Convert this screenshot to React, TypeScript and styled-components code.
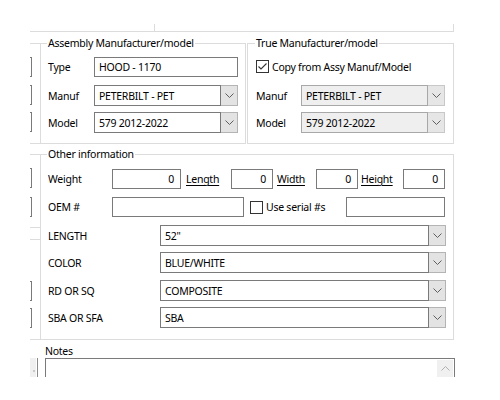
import React from "react";
import styled, { createGlobalStyle } from "styled-components";

const LINE = "#dcdcdc";
const EDGE = "#7a7a7a";

const Global = createGlobalStyle`
  html, body { margin: 0; padding: 0; background: #fff; }
  body {
    font-family: "Noto Sans", "Open Sans", sans-serif;
    font-size: 10.5px;
    letter-spacing: -0.25px;
    color: #000;
  }
`;

const Page = styled.div`
  width: 500px;
  height: 400px;
  overflow: hidden;
  box-sizing: border-box;
  padding-left: 30px;
  display: flex;
  flex-direction: column;
`;

const TopStrip = styled.div`
  display: flex;
  align-items: flex-end;
  height: 32px;
  width: 424px;
`;

const TopLeft = styled.div`
  width: 124px;
  border-bottom: 1px solid ${LINE};
`;

const TopRight = styled.div`
  flex: 1;
  height: 7px;
  border: 1px solid ${LINE};
  border-top: none;
`;

const Body = styled.div`
  display: flex;
`;

const StubCol = styled.div`
  width: 10px;
  display: flex;
  flex-direction: column;
`;

const Stub = styled.div<{ $top: number; $kind: "line" | "edge" }>`
  margin-top: ${(p) => p.$top}px;
  ${(p) =>
    p.$kind === "line"
      ? `height: 0; border-top: 1px solid ${LINE};`
      : `width: 1px; height: 18px; border: 1px solid ${EDGE}; border-left: none;`}
`;

const Main = styled.div`
  width: 414px;
  display: flex;
  flex-direction: column;
`;

const GroupRow = styled.div`
  display: flex;
  gap: 1px;
  margin-top: 11px;
`;

const Group = styled.div<{ $w: number; $h: number; $pad: number; $top?: number }>`
  box-sizing: border-box;
  width: ${(p) => p.$w}px;
  height: ${(p) => p.$h}px;
  margin-top: ${(p) => p.$top ?? 0}px;
  border: 1px solid ${LINE};
  padding-left: ${(p) => p.$pad}px;
  display: flex;
  flex-direction: column;
`;

const Caption = styled.div`
  align-self: flex-start;
  margin: -8px 0 0 -1px;
  padding: 0 1px;
  background: #fff;
  height: 15px;
  line-height: 15px;
  white-space: nowrap;
`;

const Row = styled.div<{ $top: number; $h: number }>`
  display: flex;
  align-items: center;
  margin-top: ${(p) => p.$top}px;
  height: ${(p) => p.$h}px;
`;

const Label = styled.div<{ $w: number }>`
  width: ${(p) => p.$w}px;
  flex: none;
  white-space: nowrap;
`;

const LinkLabel = styled.div<{ $w: number; $pad: number }>`
  width: ${(p) => p.$w}px;
  box-sizing: border-box;
  padding-left: ${(p) => p.$pad}px;
  flex: none;
  text-decoration: underline;
  text-underline-offset: 2px;
  white-space: nowrap;
`;

const TextBox = styled.div<{ $w: number; $right?: boolean }>`
  box-sizing: border-box;
  width: ${(p) => p.$w}px;
  height: 100%;
  flex: none;
  border: 1px solid ${EDGE};
  background: #fff;
  display: flex;
  align-items: center;
  justify-content: ${(p) => (p.$right ? "flex-end" : "flex-start")};
  padding: 0 6px 0 4px;
  white-space: nowrap;
`;

const Combo = styled.div<{ $w: number }>`
  width: ${(p) => p.$w}px;
  height: 100%;
  flex: none;
  display: flex;
`;

const ComboField = styled.div<{ $disabled?: boolean }>`
  box-sizing: border-box;
  flex: 1;
  height: 100%;
  border: 1px solid ${(p) => (p.$disabled ? "#a8a8a8" : EDGE)};
  background: ${(p) => (p.$disabled ? "#efefef" : "#fff")};
  display: flex;
  align-items: center;
  padding-left: 4px;
  white-space: nowrap;
`;

const ComboButton = styled.div<{ $disabled?: boolean }>`
  box-sizing: border-box;
  width: 17px;
  height: 100%;
  flex: none;
  border: 1px solid ${(p) => (p.$disabled ? "#c8c8c8" : "#b4b4b4")};
  border-left: none;
  background: ${(p) => (p.$disabled ? "#e6e6e6" : "#e3e3e3")};
  display: flex;
  align-items: center;
  justify-content: center;
`;

const CheckBox = styled.div`
  box-sizing: border-box;
  width: 13px;
  height: 13px;
  flex: none;
  border: 1px solid #333;
  background: #fff;
  display: flex;
`;

const CheckText = styled.div`
  margin-left: 3px;
  white-space: nowrap;
`;

const CheckSpacer = styled.div<{ $w: number; $pad: number }>`
  width: ${(p) => p.$w}px;
  box-sizing: border-box;
  padding-left: ${(p) => p.$pad}px;
  flex: none;
  display: flex;
  align-items: center;
`;

const NotesSection = styled.div`
  display: flex;
  align-items: flex-end;
`;

const NotesStub = styled.div`
  box-sizing: border-box;
  width: 8px;
  height: 19px;
  border-right: 1px solid #8a8a8a;
  background: linear-gradient(to right, #f0f0f0 0 6px, #fff 6px);
  display: flex;
  align-items: center;
  padding-left: 3px;
`;

const NotesDot = styled.div`
  width: 2px;
  height: 2px;
  margin-top: 6px;
  background: #c8c8c8;
`;

const NotesCol = styled.div`
  margin-left: 7px;
  display: flex;
  flex-direction: column;
`;

const NotesLabel = styled.div`
  margin-top: 5px;
  height: 13px;
  line-height: 13px;
`;

const NotesBox = styled.div`
  box-sizing: border-box;
  width: 410px;
  height: 19px;
  border: 1px solid ${EDGE};
  border-bottom: none;
  display: flex;
  justify-content: flex-end;
  padding: 1px 1px 0 0;
`;

const ScrollUp = styled.div`
  width: 16px;
  height: 100%;
  background: #f0f0f0;
  display: flex;
  align-items: center;
  justify-content: center;
`;

const Chevron = ({ up, color }: { up?: boolean; color: string }) => (
  <svg width="9" height="5" viewBox="0 0 9 5">
    <path
      d={up ? "M0.5 4.5 L4.5 0.5 L8.5 4.5" : "M0.5 0.5 L4.5 4.5 L8.5 0.5"}
      fill="none"
      stroke={color}
      strokeWidth="1"
    />
  </svg>
);

const Check = () => (
  <svg width="11" height="11" viewBox="0 0 11 11">
    <path d="M1.5 5.5 L4 8 L9.5 2.5" fill="none" stroke="#333" strokeWidth="1.1" />
  </svg>
);

const DropDown = ({
  w,
  value,
  disabled,
}: {
  w: number;
  value: string;
  disabled?: boolean;
}) => (
  <Combo $w={w}>
    <ComboField $disabled={disabled}>{value}</ComboField>
    <ComboButton $disabled={disabled}>
      <Chevron color="#5f5f5f" />
    </ComboButton>
  </Combo>
);

const stubs: { top: number; kind: "line" | "edge" }[] = [
  { top: 11, kind: "line" },
  { top: 13, kind: "edge" },
  { top: 8, kind: "edge" },
  { top: 7, kind: "edge" },
  { top: 11, kind: "line" },
  { top: 10, kind: "line" },
  { top: 13, kind: "edge" },
  { top: 9, kind: "edge" },
  { top: 10, kind: "line" },
  { top: 11, kind: "line" },
  { top: 41, kind: "edge" },
  { top: 7, kind: "edge" },
  { top: 11, kind: "line" },
];

const attributes = [
  { label: "LENGTH", value: '52"', top: 8 },
  { label: "COLOR", value: "BLUE/WHITE", top: 6 },
  { label: "RD OR SQ", value: "COMPOSITE", top: 7 },
  { label: "SBA OR SFA", value: "SBA", top: 6 },
];

export default function App() {
  return (
    <>
      <Global />
      <Page>
        <TopStrip>
          <TopLeft />
          <TopRight />
        </TopStrip>
        <Body>
          <StubCol>
            {stubs.map((s, i) => (
              <Stub key={i} $top={s.top} $kind={s.kind} />
            ))}
          </StubCol>
          <Main>
            <GroupRow>
              <Group $w={206} $h={101} $pad={7}>
                <Caption>Assembly Manufacturer/model</Caption>
                <Row $top={6} $h={20}>
                  <Label $w={46}>Type</Label>
                  <TextBox $w={144}>HOOD - 1170</TextBox>
                </Row>
                <Row $top={8} $h={21}>
                  <Label $w={46}>Manuf</Label>
                  <DropDown w={144} value="PETERBILT - PET" />
                </Row>
                <Row $top={6} $h={21}>
                  <Label $w={46}>Model</Label>
                  <DropDown w={144} value="579 2012-2022" />
                </Row>
              </Group>
              <Group $w={207} $h={101} $pad={8}>
                <Caption>True Manufacturer/model</Caption>
                <Row $top={9} $h={13}>
                  <CheckBox>
                    <Check />
                  </CheckBox>
                  <CheckText>Copy from Assy Manuf/Model</CheckText>
                </Row>
                <Row $top={12} $h={21}>
                  <Label $w={45}>Manuf</Label>
                  <DropDown w={144} value="PETERBILT - PET" disabled />
                </Row>
                <Row $top={6} $h={21}>
                  <Label $w={45}>Model</Label>
                  <DropDown w={144} value="579 2012-2022" disabled />
                </Row>
              </Group>
            </GroupRow>
            <Group $w={414} $h={186} $pad={7} $top={10}>
              <Caption>Other information</Caption>
              <Row $top={7} $h={20}>
                <Label $w={64}>Weight</Label>
                <TextBox $w={69} $right>0</TextBox>
                <LinkLabel $w={50} $pad={5}>Length</LinkLabel>
                <TextBox $w={42} $right>0</TextBox>
                <LinkLabel $w={43} $pad={4}>Width</LinkLabel>
                <TextBox $w={42} $right>0</TextBox>
                <LinkLabel $w={45} $pad={3}>Height</LinkLabel>
                <TextBox $w={42} $right>0</TextBox>
              </Row>
              <Row $top={8} $h={20}>
                <Label $w={64}>OEM #</Label>
                <TextBox $w={132} />
                <CheckSpacer $w={102} $pad={6}>
                  <CheckBox />
                  <CheckText>Use serial #s</CheckText>
                </CheckSpacer>
                <TextBox $w={99} />
              </Row>
              {attributes.map((a) => (
                <Row key={a.label} $top={a.top} $h={21}>
                  <Label $w={112}>{a.label}</Label>
                  <DropDown w={286} value={a.value} />
                </Row>
              ))}
            </Group>
          </Main>
        </Body>
        <NotesSection>
          <NotesStub>
            <NotesDot />
          </NotesStub>
          <NotesCol>
            <NotesLabel>Notes</NotesLabel>
            <NotesBox>
              <ScrollUp>
                <Chevron up color="#b0b0b0" />
              </ScrollUp>
            </NotesBox>
          </NotesCol>
        </NotesSection>
      </Page>
    </>
  );
}
